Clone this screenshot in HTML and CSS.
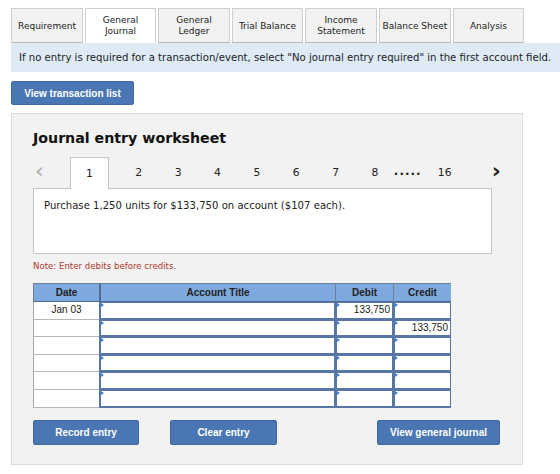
FILE: index.html
```html
<!DOCTYPE html>
<html>
<head>
<meta charset="utf-8">
<link rel="stylesheet" href="styles.css">
</head>
<body>
<div class="tabs">
  <div class="tab w72">Requirement</div>
  <div class="tab active w71">General<br>Journal</div>
  <div class="tab w72">General<br>Ledger</div>
  <div class="tab w71">Trial Balance</div>
  <div class="tab w72">Income<br>Statement</div>
  <div class="tab w72">Balance Sheet</div>
  <div class="tab w71">Analysis</div>
</div>
<div class="info">If no entry is required for a transaction/event, select "No journal entry required" in the first account field.</div>
<button class="btn view-list">View transaction list</button>

<div class="panel">
  <h2 class="title">Journal entry worksheet</h2>
  <div class="steps">
    <div class="arrow prev">&lsaquo;</div>
    <div class="step current">1</div>
    <div class="step-gap"></div>
    <div class="step">2</div>
    <div class="step">3</div>
    <div class="step">4</div>
    <div class="step">5</div>
    <div class="step">6</div>
    <div class="step">7</div>
    <div class="step">8</div>
    <div class="dots">.....</div>
    <div class="step last">16</div>
    <div class="arrow next">&rsaquo;</div>
  </div>
  <div class="desc">Purchase 1,250 units for $133,750 on account ($107 each).</div>
  <div class="note">Note: Enter debits before credits.</div>

  <div class="grid">
    <div class="hd">Date</div>
    <div class="hd hd-acct">Account Title</div>
    <div class="hd">Debit</div>
    <div class="hd">Credit</div>

    <div class="date">Jan 03</div><div class="in"></div><div class="in num">133,750</div><div class="in"></div>
    <div class="date"></div><div class="in"></div><div class="in"></div><div class="in num">133,750</div>
    <div class="date"></div><div class="in"></div><div class="in"></div><div class="in"></div>
    <div class="date"></div><div class="in"></div><div class="in"></div><div class="in"></div>
    <div class="date"></div><div class="in"></div><div class="in"></div><div class="in"></div>
    <div class="date"></div><div class="in"></div><div class="in"></div><div class="in"></div>
  </div>

  <div class="actions">
    <button class="btn record">Record entry</button>
    <button class="btn clear">Clear entry</button>
    <button class="btn general">View general journal</button>
  </div>
</div>
</body>
</html>
```

FILE: styles.css
```css
* { box-sizing: border-box; }
html, body { margin: 0; padding: 0; background: #fff; }
body {
  font-family: "DejaVu Sans", Verdana, sans-serif;
  color: #222;
  width: 560px;
  height: 474px;
  overflow: hidden;
}
.tabs {
  display: flex;
  gap: 2px;
  padding: 8px 0 0 11px;
  height: 43px;
}
.tab {
  height: 35px;
  border: 1px solid #cfcfcf;
  border-bottom: 1px solid #b9b9b9;
  background: #f2f2f2;
  font-size: 9px;
  line-height: 11px;
  display: flex;
  align-items: center;
  justify-content: center;
  text-align: center;
  color: #222;
  padding-top: 1px;
}
.tab.active { background: #fff; border-bottom-color: #fff; }
.w71 { width: 71px; }
.w72 { width: 72px; }
.info {
  margin-left: 11px;
  height: 29px;
  background: #deebf7;
  font-size: 10.15px;
  line-height: 29px;
  padding-left: 8px;
  white-space: nowrap;
  color: #222;
}
.btn {
  border: 1px solid #4069a3;
  background: #4a77b4;
  color: #fff;
  font-family: "Liberation Sans", Arial, sans-serif;
  font-weight: bold;
  font-size: 10px;
  border-radius: 2px;
  padding: 0;
  display: block;
}
.view-list {
  margin: 9px 0 0 11px;
  width: 123px;
  height: 24px;
}
.panel {
  margin: 8px 0 0 11px;
  width: 512px;
  height: 352px;
  background: #f2f2f2;
  border: 1px solid #dcdcdc;
  padding: 0 0 0 21px;
}
.title {
  margin: 0;
  padding-top: 14px;
  height: 43px;
  font-size: 14.2px;
  line-height: 20px;
  font-weight: bold;
  color: #111;
}
.steps {
  display: flex;
  height: 31px;
  align-items: stretch;
  font-size: 10.8px;
}
.arrow {
  display: flex;
  align-items: center;
  font-size: 22px;
  line-height: 1;
  padding-bottom: 4px;
}
.prev { width: 37px; justify-content: flex-start; padding-left: 2px; color: #aaa; }
.next { margin-left: 27px; color: #222; font-weight: bold; }
.step {
  width: 39.4px;
  display: flex;
  align-items: center;
  justify-content: center;
}
.step.current {
  width: 39px;
  background: #fff;
  border: 1px solid #c4c4c4;
  border-bottom: none;
  margin-bottom: -1px;
  position: relative;
  z-index: 1;
}
.step-gap { width: 10px; }
.dots {
  width: 30px;
  display: flex;
  align-items: center;
  justify-content: center;
  font-size: 12px;
  font-weight: bold;
  letter-spacing: 1px;
  padding-bottom: 3px;
  margin-left: -2px;
}
.step.last { margin-left: 2px; width: 40px; }
.desc {
  width: 459px;
  height: 66px;
  background: #fff;
  border: 1px solid #c4c4c4;
  font-size: 10.1px;
  padding: 11px 0 0 10px;
  color: #222;
}
.note {
  margin-top: 7px;
  font-size: 8.6px;
  color: #b0392e;
  height: 22px;
  line-height: 11px;
}
.grid {
  display: grid;
  grid-template-columns: 66px 236px 58px 58px;
  grid-template-rows: 19px repeat(6, 17.6px);
  width: 418px;
  font-family: "Liberation Sans", Arial, sans-serif;
  font-size: 10px;
  border-right: 1px solid #7f8fa6;
}
.hd {
  background: #7ea9df;
  font-weight: bold;
  color: #222;
  text-align: center;
  line-height: 17px;
  border: 1px solid #6f7f96;
  border-right: none;
  border-bottom: 1px solid #4f6b95;
}
.hd-acct { border-left: 2px solid #4f6b95; }
.date {
  background: #fff;
  border-left: 1px solid #a8a8a8;
  border-bottom: 1px solid #b6b6b6;
  text-align: center;
  line-height: 16px;
  color: #222;
}
.in {
  background: #fff;
  border: 2px solid #5877a6;
  border-top-width: 1px;
  border-right-width: 1px;
  position: relative;
  text-align: right;
  padding-right: 2px;
  line-height: 14px;
  color: #222;
}
.in::before {
  content: "";
  position: absolute;
  left: 0;
  top: 0;
  border-top: 2px solid transparent;
  border-bottom: 2px solid transparent;
  border-left: 3px solid #3f7fd6;
}
.actions {
  display: flex;
  margin-top: 12px;
}
.actions .btn { height: 25px; }
.record { width: 106px; }
.clear { width: 107px; margin-left: 31px; }
.general { width: 123px; margin-left: 100px; }
```
